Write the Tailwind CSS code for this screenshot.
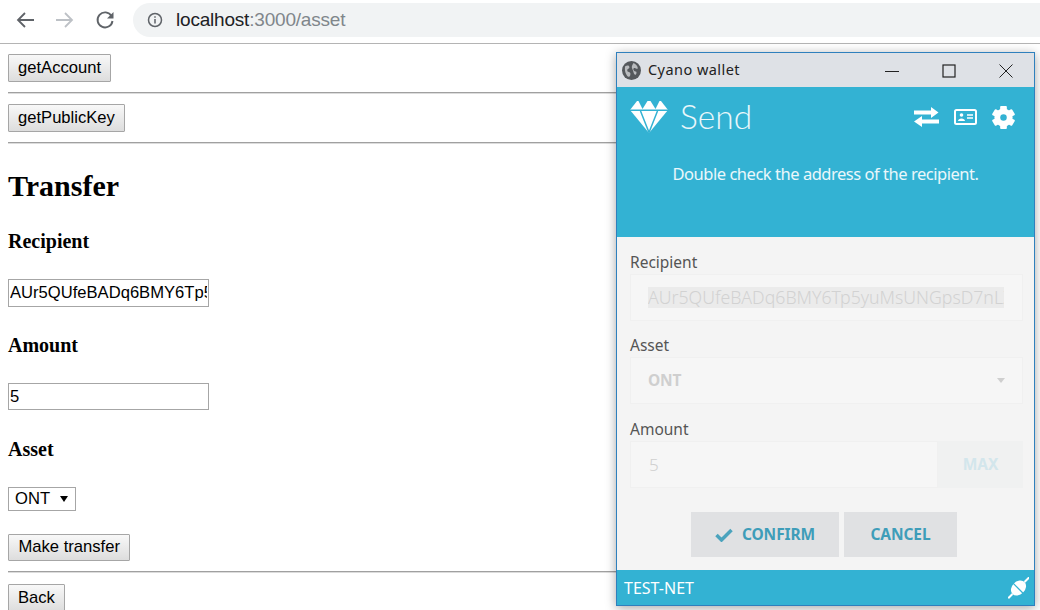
<!DOCTYPE html>
<html lang="en">
<head>
<meta charset="UTF-8">
<title>localhost:3000/asset</title>
<script src="https://cdn.jsdelivr.net/npm/@tailwindcss/browser@4"></script>
</head>
<body class="relative w-[1040px] h-[610px] overflow-hidden bg-white font-['Liberation_Serif',serif] text-black">

<!-- browser toolbar -->
<div class="flex items-center h-[44px] border-b border-[#b4b4b4] font-['Liberation_Sans',sans-serif]">
  <div class="flex items-center gap-[20px] pl-[15px] w-[133px] -mt-[3px]">
    <svg class="w-[20px] h-[20px]" viewBox="0 0 20 20" fill="none" stroke="#5f6368" stroke-width="1.8"><path d="M19 10H3M10 3l-7 7 7 7"/></svg>
    <svg class="w-[20px] h-[20px]" viewBox="0 0 20 20" fill="none" stroke="#bdc1c6" stroke-width="1.8"><path d="M1 10h16M10 3l7 7-7 7"/></svg>
    <svg class="w-[20px] h-[20px]" viewBox="0 0 20 20" fill="none" stroke="#5f6368" stroke-width="1.9"><path d="M16.500 6A7.500 7.500 0 1 0 17.500 11"/><path d="M18.500 2v6.500H12z" fill="#5f6368" stroke="none"/></svg>
  </div>
  <div class="flex items-center flex-1 h-[34px] -mt-[3px] rounded-l-full bg-[#f1f3f4] pl-[14px]">
    <svg class="w-[16px] h-[16px]" viewBox="0 0 16 16" fill="none" stroke="#5f6368" stroke-width="1.500"><circle cx="8" cy="8" r="6.500"/><path d="M8 7v4.500M8 4.300v1.500"/></svg>
    <span class="ml-[13px] text-[19px] tracking-[-0.2px] text-[#202124]">localhost<span class="text-[#80868b]">:3000/asset</span></span>
  </div>
</div>

<!-- page -->
<div class="px-[8px] pt-[10px]">
  <button class="block h-[28px] px-[9px] border border-[#a6a6a6] rounded-[1px] bg-linear-to-b from-[#f8f8f8] to-[#dddddd] font-['Liberation_Sans',sans-serif] text-[16.600px]">getAccount</button>
  <hr class="mt-[10px] mb-[10px] border-t border-b border-t-[#a0a0a0] border-b-[#dcdcdc]">
  <button class="block h-[28px] px-[9px] border border-[#a6a6a6] rounded-[1px] bg-linear-to-b from-[#f8f8f8] to-[#dddddd] font-['Liberation_Sans',sans-serif] text-[16.600px]">getPublicKey</button>
  <hr class="mt-[10px] border-t border-b border-t-[#a0a0a0] border-b-[#dcdcdc]">
  <h1 class="mt-[24px] text-[30px] leading-[36px] font-bold">Transfer</h1>
  <h4 class="mt-[27px] text-[20px] leading-[20px] font-bold">Recipient</h4>
  <input class="block mt-[28px] w-[201px] h-[28px] px-[1px] border border-[#a6a6a6] font-['Liberation_Sans',sans-serif] text-[16.600px]" value="AUr5QUfeBADq6BMY6Tp5yuMsUNGpsD7nLZ">
  <h4 class="mt-[28px] text-[20px] leading-[20px] font-bold">Amount</h4>
  <input class="block mt-[28px] w-[201px] h-[27px] px-[1px] border border-[#a6a6a6] font-['Liberation_Sans',sans-serif] text-[16.600px]" value="5">
  <h4 class="mt-[29px] text-[20px] leading-[20px] font-bold">Asset</h4>
  <div class="flex items-center mt-[28px] w-[68px] h-[24px] pl-[6px] border border-[#a6a6a6] font-['Liberation_Sans',sans-serif] text-[16.600px]">ONT<span class="ml-[10px] w-0 h-0 border-x-[4px] border-t-[6px] border-x-transparent border-t-black"></span></div>
  <button class="block mt-[23px] h-[27px] px-[9.500px] border border-[#a6a6a6] rounded-[1px] bg-linear-to-b from-[#f8f8f8] to-[#dddddd] font-['Liberation_Sans',sans-serif] text-[16.600px]">Make transfer</button>
  <hr class="mt-[10px] mb-[11px] border-t border-b border-t-[#a0a0a0] border-b-[#dcdcdc]">
  <button class="block h-[28px] px-[9px] border border-[#a6a6a6] rounded-[1px] bg-linear-to-b from-[#f8f8f8] to-[#dddddd] font-['Liberation_Sans',sans-serif] text-[16.600px]">Back</button>
</div>

<!-- wallet popup window -->
<div class="absolute left-[616px] top-[52px] w-[419px] h-[554px] flex flex-col border border-[#2f80bd] bg-[#f4f4f4] shadow-[0_2px_10px_rgba(0,0,0,0.35)] font-['Noto_Sans',sans-serif]">
  <div class="flex items-center h-[34px] shrink-0 bg-[#dee1e6]">
    <svg class="ml-[5px] w-[19px] h-[19px]" viewBox="0 0 18 18"><circle cx="9" cy="9" r="9" fill="#55585c"/><path d="M3 5c2-1 4-1 4 1s-2 1-2 3 3 1 3 3-1 3-2 3C4 14 2 9 3 5zM11 2c2 1 4 3 4 5-2 1-3-1-4 0s1 3 2 3 1 2 0 3c-2 0-2-3-3-5s-1-3 1-6z" fill="#b9bbbe"/></svg>
    <span class="ml-[7px] text-[14.500px] tracking-[0.45px] text-[#222]">Cyano wallet</span>
    <div class="flex items-center ml-auto mt-[2px]">
      <svg class="w-[14px] h-[14px] mr-[43px]" viewBox="0 0 14 14" fill="none" stroke="#222" stroke-width="1"><path d="M0 7.500h14"/></svg>
      <svg class="w-[14px] h-[14px] mr-[43px]" viewBox="0 0 14 14" fill="none" stroke="#222" stroke-width="1.200"><rect x="1" y="1" width="12" height="12"/></svg>
      <svg class="w-[14px] h-[14px] mr-[21px]" viewBox="0 0 14 14" fill="none" stroke="#222" stroke-width="1"><path d="M.500.500l13 13M13.500.500l-13 13"/></svg>
    </div>
  </div>

  <div class="h-[150px] shrink-0 bg-[#33b2d3] text-white">
    <div class="flex items-center h-[60px] pl-[13px] pr-[19px]">
      <svg class="w-[38px] h-[32px]" viewBox="0 0 38 32">
        <path d="M7 0h24l7 9-19 23L0 9z" fill="white"/>
        <path d="M8.500 0h9L12.500 8zM20.500 0h9L25.500 8zM0 8.500h38V10H0z" fill="#33b2d3"/>
        <path d="M10.500 10L19 31.500 27.500 10" fill="none" stroke="#33b2d3" stroke-width="1.500"/>
      </svg>
      <span class="ml-[12px] font-['Lato',sans-serif] font-light text-[33.500px] leading-none text-white/90">Send</span>
      <div class="flex items-center ml-auto gap-[15px]">
        <svg class="w-[25px] h-[20px]" viewBox="0 0 25 20" fill="white"><path d="M0 3.500h17V0l7.500 5.500L17 11V7.500H0zM25 12.500v4H8V20l-8-5.500L8 9v3.500z"/></svg>
        <svg class="w-[23px] h-[16px]" viewBox="0 0 23 16" fill="none"><rect x="1" y="1" width="21" height="14" rx="1.500" stroke="white" stroke-width="2"/><circle cx="7.500" cy="6" r="1.800" fill="white"/><path d="M4 12c0-3.500 7-3.500 7 0z" fill="white"/><path d="M13 6h6M13 9h6" stroke="white" stroke-width="1.500"/></svg>
        <svg class="w-[23px] h-[23px]" viewBox="0 0 24 24">
          <g fill="white">
            <circle cx="12" cy="12" r="9.500"/>
            <rect x="8.500" y="0" width="7" height="5" rx="1"/>
            <rect x="8.500" y="0" width="7" height="5" rx="1" transform="rotate(60 12 12)"/>
            <rect x="8.500" y="0" width="7" height="5" rx="1" transform="rotate(120 12 12)"/>
            <rect x="8.500" y="0" width="7" height="5" rx="1" transform="rotate(180 12 12)"/>
            <rect x="8.500" y="0" width="7" height="5" rx="1" transform="rotate(240 12 12)"/>
            <rect x="8.500" y="0" width="7" height="5" rx="1" transform="rotate(300 12 12)"/>
          </g>
          <circle cx="12" cy="12" r="3.400" fill="#33b2d3"/>
        </svg>
      </div>
    </div>
    <p class="mt-[15px] text-center text-[16.500px] leading-[24px] tracking-[-0.47px] text-white/90">Double check the address of the recipient.</p>
  </div>

  <div class="flex-1 pl-[13px] pr-[11px] pt-[13px]">
    <label class="block text-[15.500px] leading-[24px] text-[#555]">Recipient</label>
    <div class="flex items-center h-[47px] px-[17px] border border-[#f0f0f0] bg-[#f6f6f6]">
      <span class="block w-[356px] overflow-hidden whitespace-nowrap bg-[#ebebeb] font-light text-[17.700px] leading-[21px] text-[#d2d2d2]">AUr5QUfeBADq6BMY6Tp5yuMsUNGpsD7nLZ</span>
    </div>
    <label class="block mt-[12px] text-[15.500px] leading-[24px] text-[#555]">Asset</label>
    <div class="flex items-center justify-between h-[47px] px-[17px] border border-[#f0f0f0] bg-[#f6f6f6]">
      <span class="text-[15.500px] tracking-[-0.2px] font-bold text-[#cfcfcf]">ONT</span>
      <span class="w-0 h-0 border-x-[4px] border-t-[5px] border-x-transparent border-t-[#cfcfcf]"></span>
    </div>
    <label class="block mt-[13px] text-[15.500px] leading-[24px] text-[#555]">Amount</label>
    <div class="flex h-[47px]">
      <div class="flex items-center flex-1 pl-[18px] border border-[#f0f0f0] bg-[#f6f6f6] font-light text-[17px] text-[#cfcfcf]">5</div>
      <div class="flex items-center justify-center w-[85px] bg-[#f0f1f1] text-[15.500px] font-bold text-[#d3e6ec]">MAX</div>
    </div>
    <div class="flex justify-center gap-[5px] mt-[24px] pr-[5px]">
      <div class="flex items-center justify-center gap-[9px] w-[148px] h-[45px] bg-[#e0e1e3] text-[15.500px] tracking-[-0.1px] font-bold text-[#3e9db9]">
        <svg class="w-[18px] h-[14px]" viewBox="0 0 18 14" fill="none" stroke="#4ba3bd" stroke-width="3.500"><path d="M1.500 7l5 5L16.500 2"/></svg>
        CONFIRM
      </div>
      <div class="flex items-center justify-center w-[113px] h-[45px] bg-[#e0e1e3] text-[15.500px] tracking-[-0.1px] font-bold text-[#3e9db9]">CANCEL</div>
    </div>
  </div>

  <div class="flex items-center justify-between h-[35px] shrink-0 pl-[7px] pr-[5px] bg-[#33b2d3] text-white">
    <span class="text-[16px]">TEST-NET</span>
    <svg class="w-[21px] h-[22px]" viewBox="0 0 21 22" fill="white">
      <g transform="rotate(-45 10.500 11)">
        <ellipse cx="10.500" cy="11" rx="8.500" ry="6.500"/>
        <path d="M10 3v16" stroke="#33b2d3" stroke-width="1.200"/>
        <path d="M-4 11h6M19 11h7" stroke="white" stroke-width="2"/>
      </g>
    </svg>
  </div>
</div>
</body>
</html>
